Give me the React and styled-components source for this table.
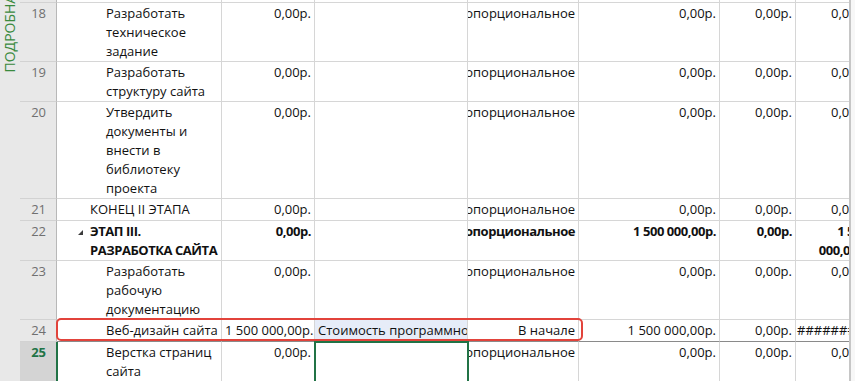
import React from "react";
import styled, { createGlobalStyle, css } from "styled-components";

const GlobalStyle = createGlobalStyle`
  html, body {
    margin: 0;
    padding: 0;
    background: #fff;
  }
  body {
    font-family: "Open Sans", "Noto Sans", sans-serif;
    font-size: 13px;
    color: #111;
    overflow: hidden;
  }
`;

const COLUMNS = "37px 165px 93px 153px 111px 141px 76px 76px";
const GRID_LINE = "#d6d6d6";
const GREEN = "#217346";

const Screen = styled.div`
  display: flex;
  width: 855px;
  height: 381px;
  overflow: hidden;
`;

const ViewBar = styled.div`
  flex: none;
  width: 20px;
  background: #e8e8e8;
  overflow: hidden;
  display: flex;
  flex-direction: column;
`;

const ViewLabelSlot = styled.div`
  flex: none;
  height: 73px;
  display: flex;
  flex-direction: column;
  justify-content: flex-end;
  align-items: center;
`;

const ViewLabel = styled.span`
  writing-mode: vertical-rl;
  transform: rotate(180deg);
  white-space: nowrap;
  color: #3a8a3e;
  font-size: 14px;
  line-height: 20px;
`;

const Sheet = styled.div`
  flex: none;
  width: 829px;
  overflow: hidden;
`;

const Splitter = styled.div`
  flex: none;
  width: 2px;
  background: #c6c6c6;
`;

const Margin = styled.div`
  flex: 1;
  background: #f7f7f7;
`;

const Row = styled.div`
  position: relative;
  display: grid;
  grid-template-columns: ${COLUMNS};
  min-height: ${(p) => p.$minHeight || 22}px;
  font-weight: ${(p) => (p.$bold ? 700 : 400)};
  letter-spacing: ${(p) => (p.$bold ? "-0.45px" : "normal")};

  ${(p) =>
    p.$marked &&
    css`
      &::after {
        content: "";
        position: absolute;
        left: 36px;
        top: -2px;
        width: 527px;
        height: 23px;
        box-sizing: border-box;
        border: 2.5px solid #e2433b;
        border-radius: 5px;
        pointer-events: none;
        z-index: 3;
      }
    `}
`;

const RowNumber = styled.div`
  box-sizing: border-box;
  padding: 1px 10px 0 0;
  line-height: 19px;
  letter-spacing: normal;
  text-align: right;
  color: ${(p) => (p.$active ? GREEN : "#707070")};
  font-weight: ${(p) => (p.$active ? 700 : 400)};
  background: ${(p) => (p.$active ? "#d4d4d4" : "#e8e8e8")};
  border-bottom: 1px solid #d2d2d2;
  border-right: 1px solid ${(p) => (p.$active ? GREEN : "#b8b8b8")};
  box-shadow: ${(p) => (p.$active ? `1px 0 0 ${GREEN}` : "none")};
  position: relative;
  z-index: 1;
`;

const Cell = styled.div`
  position: relative;
  box-sizing: border-box;
  min-width: 0;
  padding: 1px 3px 0;
  line-height: 19px;
  text-align: ${(p) => p.$align || "right"};
  white-space: ${(p) => (p.$nowrap ? "nowrap" : "normal")};
  background: ${(p) => p.$tint || "transparent"};
  border-right: 1px solid ${GRID_LINE};
  border-bottom: 1px solid ${(p) => (p.$strongRule ? "#8a8a8a" : GRID_LINE)};
  overflow: hidden;

  ${(p) =>
    p.$selected &&
    css`
      overflow: visible;
      z-index: 2;
      outline: 2px solid ${GREEN};
      outline-offset: -1px;

      &::after {
        content: "";
        position: absolute;
        right: -4px;
        bottom: -5px;
        width: 5px;
        height: 5px;
        background: ${GREEN};
        border: 1px solid #fff;
      }
    `}
`;

const NameCell = styled(Cell)`
  display: flex;
  align-items: flex-start;
  text-align: left;
  padding-left: ${(p) => p.$indent}px;
  padding-right: 1px;
`;

const Twisty = styled.span`
  flex: none;
  width: 12px;
  height: 19px;
  display: flex;
  align-items: center;
`;

const ClipRight = styled(Cell)`
  display: flex;
  justify-content: flex-end;
  align-items: flex-start;
  white-space: nowrap;
`;

const Hashes = styled(Cell)`
  text-align: left;
  white-space: nowrap;
  padding-left: 1px;
`;

const rows = [
  {
    id: 18,
    name: "Разработать техническое задание",
    level: 2,
    cost: "0,00р.",
    accrual: "Пропорциональное",
    total: "0,00р.",
    base: "0,00р.",
    actual: "0,00р.",
  },
  {
    id: 19,
    name: "Разработать структуру сайта",
    level: 2,
    cost: "0,00р.",
    accrual: "Пропорциональное",
    total: "0,00р.",
    base: "0,00р.",
    actual: "0,00р.",
  },
  {
    id: 20,
    name: "Утвердить документы и внести в библиотеку проекта",
    level: 2,
    cost: "0,00р.",
    accrual: "Пропорциональное",
    total: "0,00р.",
    base: "0,00р.",
    actual: "0,00р.",
  },
  {
    id: 21,
    name: "КОНЕЦ II ЭТАПА",
    level: 1,
    cost: "0,00р.",
    accrual: "Пропорциональное",
    total: "0,00р.",
    base: "0,00р.",
    actual: "0,00р.",
  },
  {
    id: 22,
    name: "ЭТАП III. РАЗРАБОТКА САЙТА",
    level: 1,
    summary: true,
    cost: "0,00р.",
    accrual: "Пропорциональное",
    total: "1 500 000,00р.",
    base: "0,00р.",
    actual: "1 500 000,00р.",
  },
  {
    id: 23,
    name: "Разработать рабочую документацию",
    level: 2,
    cost: "0,00р.",
    accrual: "Пропорциональное",
    total: "0,00р.",
    base: "0,00р.",
    actual: "0,00р.",
  },
  {
    id: 24,
    name: "Веб-дизайн сайта",
    level: 2,
    marked: true,
    cost: "1 500 000,00р.",
    note: "Стоимость программного обеспечения",
    accrual: "В начале",
    total: "1 500 000,00р.",
    base: "0,00р.",
    overflow: true,
  },
  {
    id: 25,
    name: "Верстка страниц сайта",
    level: 2,
    active: true,
    cost: "0,00р.",
    accrual: "Пропорциональное",
    total: "0,00р.",
    base: "0,00р.",
    actual: "0,00р.",
  },
];

function SummaryMark() {
  return (
    <svg width="5" height="5" viewBox="0 0 5 5" style={{ marginTop: 1 }}>
      <polygon points="5,0 5,5 0,5" fill="#3c3c3c" />
    </svg>
  );
}

function TaskRow({ task }) {
  const strong = task.marked;
  return (
    <Row
      $bold={task.summary}
      $marked={task.marked}
      $minHeight={task.active ? 44 : 22}
    >
      <RowNumber $active={task.active}>{task.id}</RowNumber>
      <NameCell
        $indent={task.summary ? 21 : task.level === 1 ? 33 : 49}
        $strongRule={strong}
      >
        {task.summary && (
          <Twisty>
            <SummaryMark />
          </Twisty>
        )}
        <span>{task.name}</span>
      </NameCell>
      <Cell $strongRule={strong} $nowrap>
        {task.cost}
      </Cell>
      <Cell
        $align="left"
        $nowrap
        $strongRule={strong}
        $tint={task.note ? "#e6ecf8" : undefined}
        $selected={task.active}
      >
        {task.note}
      </Cell>
      <ClipRight $strongRule={strong}>
        <span>{task.accrual}</span>
      </ClipRight>
      <Cell $strongRule={strong}>{task.total}</Cell>
      <Cell $strongRule={strong}>{task.base}</Cell>
      {task.overflow ? (
        <Hashes $strongRule={strong}>##########</Hashes>
      ) : (
        <Cell $strongRule={strong}>{task.actual}</Cell>
      )}
    </Row>
  );
}

function EdgeRow() {
  return (
    <Row $minHeight={3}>
      <RowNumber />
      <Cell />
      <Cell />
      <Cell />
      <Cell />
      <Cell />
      <Cell />
      <Cell />
    </Row>
  );
}

export default function App() {
  return (
    <>
      <GlobalStyle />
      <Screen>
        <ViewBar>
          <ViewLabelSlot>
            <ViewLabel>ПОДРОБНАЯ ДИАГРАММА ГАНТА</ViewLabel>
          </ViewLabelSlot>
        </ViewBar>
        <Sheet>
          <EdgeRow />
          {rows.map((task) => (
            <TaskRow key={task.id} task={task} />
          ))}
        </Sheet>
        <Splitter />
        <Margin />
      </Screen>
    </>
  );
}
